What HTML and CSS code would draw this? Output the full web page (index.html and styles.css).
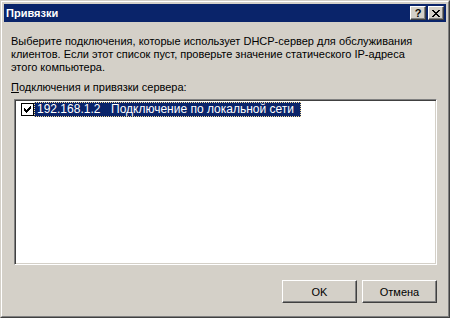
FILE: index.html
```html
<!DOCTYPE html>
<html lang="ru">
<head>
    <meta charset="UTF-8">
    <title>Привязки</title>
    <link rel="stylesheet" href="styles.css">
</head>
<body>
    <div class="window">
        <div class="frame">
            <div class="titlebar">
                <span class="title">Привязки</span>
                <button class="tbtn help">?</button>
                <button class="tbtn close">
                    <svg width="8" height="7" viewBox="0 0 8 7" shape-rendering="crispEdges">
                        <path d="M0 0h2v1h-2zM6 0h2v1h-2zM1 1h2v1h-2zM5 1h2v1h-2zM2 2h4v1h-4zM3 3h2v1h-2zM2 4h4v1h-4zM1 5h2v1h-2zM5 5h2v1h-2zM0 6h2v1h-2zM6 6h2v1h-2z" fill="#000"/>
                    </svg>
                </button>
            </div>
            <div class="content">
                <p class="desc">Выберите подключения, которые использует DHCP-сервер для обслуживания<br>клиентов. Если этот список пуст, проверьте значение статического IP-адреса<br>этого компьютера.</p>
                <div class="label"><u>П</u>одключения и привязки сервера:</div>
                <div class="list">
                    <div class="item">
                        <span class="check">
                            <svg width="11" height="11" viewBox="0 0 11 11" shape-rendering="crispEdges">
                                <path d="M2 4h1v3h-1zM3 5h1v3h-1zM4 6h1v3h-1zM5 5h1v3h-1zM6 4h1v3h-1zM7 3h1v3h-1zM8 2h1v3h-1z" fill="#000"/>
                            </svg>
                        </span>
                        <span class="sel"><span class="ip">192.168.1.2</span>Подключение по локальной сети</span>
                    </div>
                </div>
                <div class="actions">
                    <button class="button">OK</button>
                    <button class="button">Отмена</button>
                </div>
            </div>
        </div>
    </div>
</body>
</html>
```

FILE: styles.css
```css
html, body{
    margin: 0;
    padding: 0;
}
body{
    width: 450px;
    height: 318px;
    background: #d4d0c8;
    font-family: "Liberation Sans", Arial, sans-serif;
    font-size: 11px;
    color: #000;
}
.window{
    box-sizing: border-box;
    width: 450px;
    height: 318px;
    border: 1px solid;
    border-color: #d4d0c8 #404040 #404040 #d4d0c8;
}
.frame{
    box-sizing: border-box;
    height: 100%;
    border: 1px solid;
    border-color: #ffffff #808080 #808080 #ffffff;
    padding: 2px;
    display: flex;
    flex-direction: column;
}
.titlebar{
    height: 18px;
    background: #0a246a;
    display: flex;
    align-items: center;
    padding: 0 2px 0 2px;
}
.title{
    flex: 1;
    color: #fff;
    font-weight: bold;
    font-size: 11px;
    line-height: 18px;
}
.tbtn{
    box-sizing: border-box;
    width: 16px;
    height: 14px;
    padding: 0;
    background: #d4d0c8;
    border: 1px solid;
    border-color: #ffffff #404040 #404040 #ffffff;
    box-shadow: inset -1px -1px #808080;
    display: flex;
    align-items: center;
    justify-content: center;
    font-family: "Liberation Sans", Arial, sans-serif;
    font-weight: bold;
    font-size: 11px;
    line-height: 12px;
    color: #000;
}
.help{
    margin-right: 2px;
}
.content{
    flex: 1;
    display: flex;
    flex-direction: column;
    padding: 13px 9px 11px 7px;
}
.desc{
    margin: 0;
    line-height: 13px;
}
.label{
    margin-top: 7px;
    line-height: 13px;
}
.list{
    box-sizing: border-box;
    height: 166px;
    margin: 5px 0 0 3px;
    background: #fff;
    border: 1px solid;
    border-color: #808080 #ffffff #ffffff #808080;
    box-shadow: inset 1px 1px #404040, inset -1px -1px #d4d0c8;
    padding: 2px 1px 1px 1px;
}
.item{
    display: flex;
    align-items: center;
    padding-left: 5px;
}
.check{
    box-sizing: border-box;
    width: 13px;
    height: 13px;
    border: 1px solid #000;
    background: #fff;
    display: block;
}
.check svg{
    display: block;
}
.sel{
    background: #0a246a;
    color: #fff;
    font-size: 12px;
    line-height: 13px;
    border: 1px dotted #f5db95;
    padding: 0 6px 0 2px;
}
.ip{
    display: inline-block;
    width: 74px;
}
.actions{
    margin-top: auto;
    display: flex;
    justify-content: flex-end;
    gap: 5px;
}
.button{
    box-sizing: border-box;
    width: 75px;
    height: 23px;
    background: #d4d0c8;
    border: 1px solid;
    border-color: #ffffff #404040 #404040 #ffffff;
    box-shadow: inset -1px -1px #808080;
    font-family: "Liberation Sans", Arial, sans-serif;
    font-size: 11px;
    color: #000;
    padding: 0;
}
```
